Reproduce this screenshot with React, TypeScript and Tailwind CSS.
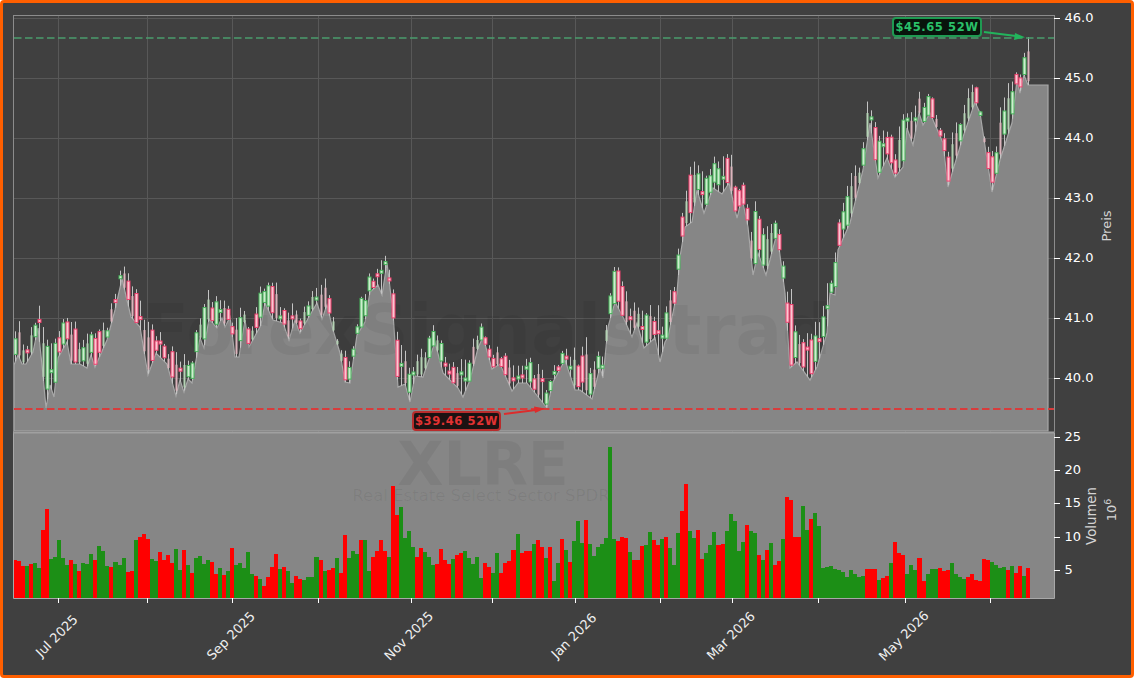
type Pt = [number, number];

// lower edge of the price series (screen px)
const lows: Pt[] = [[14,365],[18,355],[22,364],[26,364],[33,352],[38,328],[42,365],[46,408],[50,385],[54,397],[58,358],[67,342],[71,364],[80,364],[87,368],[91,355],[95,367],[107,340],[115,310],[122,279],[131,317],[140,327],[148,375],[156,353],[167,364],[176,396],[180,380],[184,392],[188,379],[192,383],[200,338],[204,348],[209,319],[217,328],[222,318],[225,327],[230,317],[235,357],[239,357],[245,320],[249,347],[261,325],[265,303],[273,320],[283,323],[289,340],[295,320],[300,333],[310,315],[317,303],[322,319],[327,305],[333,330],[340,353],[345,382],[350,383],[357,335],[365,322],[370,292],[378,285],[382,295],[387,263],[393,313],[398,387],[405,384],[410,402],[415,376],[423,377],[435,342],[443,373],[458,388],[463,397],[470,380],[478,348],[483,337],[492,369],[500,364],[512,391],[518,383],[527,383],[547,408],[553,382],[565,360],[575,390],[580,390],[592,399],[600,367],[603,378],[608,327],[615,302],[623,317],[632,337],[637,323],[644,348],[655,338],[660,362],[665,342],[668,337],[677,293],[680,257],[685,227],[692,222],[697,190],[704,213],[713,188],[722,194],[729,183],[737,218],[742,198],[748,227],[753,275],[758,253],[766,275],[777,233],[785,293],[790,368],[797,362],[810,380],[817,367],[827,333],[830,293],[835,295],[838,250],[850,223],[863,170],[870,123],[878,178],[887,158],[895,177],[903,167],[907,128],[913,145],[919,113],[923,125],[930,113],[943,143],[948,187],[953,170],[963,137],[975,102],[980,113],[992,192],[1000,160],[1008,135],[1012,123],[1017,80],[1020,93],[1024,75],[1028,85]];

// upper edge (wick tops)
const highs: Pt[] = [[14,335],[18,317],[27,342],[34,315],[38,296],[42,320],[50,348],[58,320],[70,317],[82,327],[94,327],[108,320],[119,267],[123,263],[135,273],[143,313],[155,325],[167,340],[180,355],[192,352],[201,308],[208,286],[220,300],[228,300],[232,323],[244,300],[253,325],[261,283],[277,282],[285,310],[293,298],[300,303],[308,300],[317,282],[326,277],[337,333],[345,347],[353,340],[362,293],[369,272],[382,258],[385,250],[390,255],[394,268],[397,330],[410,357],[418,352],[427,343],[434,318],[442,340],[455,363],[467,355],[475,332],[482,314],[490,345],[503,348],[515,363],[523,352],[540,365],[548,380],[555,363],[563,350],[583,343],[587,335],[592,357],[599,343],[604,337],[608,310],[616,253],[620,275],[628,293],[637,303],[648,307],[657,298],[668,300],[673,273],[677,258],[681,218],[688,170],[697,157],[701,160],[708,180],[713,157],[729,153],[733,151],[746,190],[749,215],[757,197],[762,228],[773,223],[777,211],[785,268],[790,277],[797,333],[813,333],[818,308],[823,308],[830,265],[834,265],[843,190],[853,170],[863,148],[867,100],[875,100],[880,125],[887,127],[895,138],[903,108],[910,112],[919,83],[932,88],[940,115],[948,147],[954,127],[963,107],[967,88],[975,78],[980,107],[987,148],[996,140],[999,112],[1007,87],[1011,67],[1016,62],[1020,67],[1024,47],[1028,37]];

// volume bars: r/g flag and top edge, read off the panel (z = (y - 480) * 3)
const volZ: [string, number[]][] = [
  ['r',[240,243,258]],['g',[258]],['r',[252]],['g',[249,264]],['r',[150,87]],['g',[237,231,180,234,255]],['r',[240]],['g',[252]],['r',[273]],['g',[249,252,222]],['r',[240]],['g',[198,213,258]],['r',[261]],['g',[246,255,234]],['r',[276,273]],['g',[180]],['r',[171,162,177]],['g',[237,243]],['r',[216,240,225,249]],['g',[207,270]],['r',[210]],['g',[255]],['r',[279]],['g',[234,228,252,240]],['r',[246,282]],['g',[264]],['r',[285]],['g',[273]],['r',[204]],['g',[255,249,264,216,282]],['r',[288]],['g',[297]],['r',[318,291,261,222]],['g',[267]],['r',[261]],['g',[273,309]],['r',[288,297]],['g',[300,291,291,231]],['r',[240]],['g',[273]],['r',[270,264]],['g',[234]],['r',[279,165]],['g',[234,213,222]],['r',[180]],['g',[180,273]],['r',[231,213,180,213]],['g',[231]],['r',[18,105]],['g',[81,174,153,201]],['r',[231,204]],['g',[216,231,255]],['r',[252,207,240,252]],['g',[237]],['r',[225,219]],['g',[213,234,252,231,294]],['r',[249,261]],['g',[279,219]],['r',[279,249,243,210]],['g',[162]],['r',[219,213,213]],['g',[192]],['r',[180,201]],['g',[234]],['r',[201]],['g',[303,249]],['r',[177]],['g',[210]],['r',[246]],['g',[183,123,189]],['r',[120]],['g',[192,228,201,192,174,-99,177]],['r',[183,171,174]],['g',[216]],['r',[240,240,198]],['g',[195,156]],['r',[180,195]],['g',[177]],['r',[171]],['g',[204,255,159]],['r',[93,12]],['g',[153,174]],['r',[150,237]],['g',[219,195,156]],['r',[195,192]],['g',[153,102,123,213,186]],['r',[135]],['g',[153,159]],['r',[225]],['g',[240]],['r',[210]],['g',[189]],['r',[255,243]],['g',[177]],
];
const volTail: [string, number][] = [['r',497],['r',500],['r',537],['r',537],['g',506],['g',530],['r',519],['g',513],['g',526],['g',568],['g',567],['g',566],['g',569],['g',570],['g',572],['g',577],['g',570],['g',574],['g',577],['g',576],['r',569],['r',569],['r',569],['g',580],['r',578],['r',576],['g',563],['r',542],['r',553],['r',555],['g',574],['g',565],['g',570],['r',558],['r',581],['g',574],['g',569],['g',569],['r',568],['r',571],['r',570],['g',563],['g',574],['g',577],['g',579],['r',577],['r',574],['r',580],['r',581],['r',559],['r',560],['g',562],['g',565],['g',568],['g',567],['r',570],['g',566],['r',573],['r',566],['g',576],['r',568]];

const bars: [string, number][] = [
  ...volZ.flatMap(([c, zs]) => zs.map((z): [string, number] => [c, 480 + z / 3])),
  ...volTail,
];

const lerp = (pts: Pt[], x: number) => {
  if (x <= pts[0][0]) return pts[0][1];
  for (let i = 1; i < pts.length; i++) {
    if (x <= pts[i][0]) {
      const [x0, y0] = pts[i - 1];
      const [x1, y1] = pts[i];
      return y0 + ((y1 - y0) * (x - x0)) / (x1 - x0);
    }
  }
  return pts[pts.length - 1][1];
};

let seed = 20250617;
const rnd = () => {
  seed = (seed * 1664525 + 1013904223) % 4294967296;
  return seed / 4294967296;
};

const candles = Array.from({ length: 253 }, (_, i) => {
  const x = Math.round(15 + i * 4.02) + 0.5;
  const low = lerp(lows, x);
  const envelope = lerp(highs, x);
  const j = i === 252 ? 0 : rnd();
  const high = Math.min(envelope + (low - envelope) * j * j * 0.55, low - 3);
  const range = low - high;
  const up = lerp(lows, x + 3) < lerp(lows, x - 3);
  const kind = i === 252 ? 0 : rnd();
  let top: number;
  let bottom: number;
  if (kind < 0.28) {
    top = high + range * 0.3;
    bottom = low - range * 0.08;
  } else if (kind < 0.44) {
    top = high + range * (0.25 + rnd() * 0.35);
    bottom = top + 3;
  } else {
    top = high + range * (0.05 + rnd() * 0.25);
    bottom = low - range * rnd() * 0.25;
  }
  return { x, low, high, up: rnd() < 0.2 ? !up : up, pale: kind < 0.28, top, bottom };
});

const gridX = [58, 147, 232, 318, 411, 492, 575, 660, 732, 818, 905, 990];
const priceTicks: [string, number][] = [['46.0', 18], ['45.0', 78], ['44.0', 138], ['43.0', 198], ['42.0', 258], ['41.0', 318], ['40.0', 378]];
const volTicks: [string, number][] = [['25', 437], ['20', 470], ['15', 503], ['10', 537], ['5', 570]];
const dateLabels: [string, number][] = [['Jul 2025', 60], ['Sep 2025', 234], ['Nov 2025', 412], ['Jan 2026', 577], ['Mar 2026', 734], ['May 2026', 907]];

const areaTop = lows.map(([x, y]) => `${x},${y}`).join(' ');
const font = { fontFamily: '"DejaVu Sans", sans-serif' };

export default function App() {
  return (
    <div className="h-[678px] w-[1134px] overflow-hidden rounded-[4px] border-[3px] border-[#ff5f00] bg-[#404040]">
      <svg width={1128} height={672} viewBox="3 3 1128 672" className="block" style={font}>
        {/* grid */}
        {gridX.map((x) => (
          <line key={x} x1={x + 0.5} x2={x + 0.5} y1={15} y2={432} stroke="#585858" />
        ))}
        {priceTicks.map(([t, y]) => (
          <line key={t} x1={13} x2={1054} y1={y + 0.5} y2={y + 0.5} stroke="#585858" />
        ))}

        {/* price area */}
        <polygon points={`14,431 ${areaTop} 1048,85 1048,431`} fill="#868686" />
        <polyline points={`14,431 ${areaTop} 1048,85 1048,431 14,431`} fill="none" stroke="#a8a8a8" strokeWidth={1.2} />

        {/* watermark */}
        <text x={142} y={354} fontSize={69} fontWeight={700} fill="#000" fillOpacity={0.05}>
          ForexSignals.trad
        </text>

        {/* candles */}
        {candles.map((c) => (
          <g key={c.x}>
            <line x1={c.x} x2={c.x} y1={c.high} y2={c.low} stroke="#c4c4c4" strokeWidth={1} />
            {c.pale ? (
              <rect x={c.x - 1} y={c.top} width={2} height={c.bottom - c.top} fill={c.up ? '#b4d2b4' : '#dcb4bc'} />
            ) : (
              <rect
                x={c.x - 1.5}
                y={c.top}
                width={3}
                height={c.bottom - c.top}
                fill={c.up ? '#cfeccf' : '#f8c8d2'}
                stroke={c.up ? '#46b45a' : '#f0406e'}
                strokeWidth={1}
              />
            )}
          </g>
        ))}

        {/* 52 week lines */}
        <line x1={14} x2={1054} y1={38} y2={38} stroke="#4a9c6c" strokeWidth={1.6} strokeDasharray="7.5 3.5" />
        <line x1={14} x2={1054} y1={409} y2={409} stroke="#d83c3c" strokeWidth={1.8} strokeDasharray="7.5 3.5" />

        {/* price frame */}
        <rect x={13.5} y={15.5} width={1041} height={417} fill="none" stroke="#8c8c8c" />

        {/* volume panel */}
        <rect x={13} y={433} width={1041} height={165} fill="#868686" />
        <text x={483} y={485} textAnchor="middle" fontSize={60} fontWeight={700} fill="#000" fillOpacity={0.06}>
          XLRE
        </text>
        <text x={481} y={501} textAnchor="middle" fontSize={16.5} fill="#000" fillOpacity={0.06}>
          Real Estate Select Sector SPDR
        </text>
        {bars.map(([c, top], i) => {
          const x = Math.round(13 + i * 4.02);
          return (
            <rect
              key={i}
              x={x}
              y={top}
              width={Math.round(13 + (i + 1) * 4.02) - x}
              height={598 - top}
              fill={c === 'r' ? '#ff0000' : '#1c8f16'}
            />
          );
        })}
        <path d="M13.5 433V598.5H1054.5V433" fill="none" stroke="#a8a8a8" />
        <line x1={13} x2={1054} y1={432.5} y2={432.5} stroke="#a0a0a0" strokeWidth={2} />

        {/* high callout */}
        <rect x={893} y={18} width={88} height={18} rx={3} fill="#08140c" stroke="#1f9a52" strokeWidth={2} />
        <text x={937} y={31} textAnchor="middle" fontSize={11.5} fontWeight={700} fill="#2ac069" letterSpacing={0.6}>
          $45.65 52W
        </text>
        <line x1={984} y1={32} x2={1016} y2={36} stroke="#22b45c" strokeWidth={2} />
        <polygon points="1025,37.3 1014,40 1015,33" fill="#22b45c" />

        {/* low callout */}
        <rect x={413} y={412} width={87} height={18} rx={3} fill="#1c1212" stroke="#b92c2c" strokeWidth={2} />
        <text x={456.5} y={425} textAnchor="middle" fontSize={11.5} fontWeight={700} fill="#e23232" letterSpacing={0.6}>
          $39.46 52W
        </text>
        <line x1={504} y1={414} x2={536} y2={410} stroke="#dd2c2c" strokeWidth={2} />
        <polygon points="545,408.6 534,406.5 535,413" fill="#dd2c2c" />

        {/* right axes */}
        {[...priceTicks, ...volTicks].map(([t, y]) => (
          <g key={t}>
            <line x1={1054} x2={1060} y1={y + 0.5} y2={y + 0.5} stroke="#fff" />
            <text x={1064.5} y={y + 4} fontSize={13} fill="#fff">
              {t}
            </text>
          </g>
        ))}
        <text transform="translate(1111 226) rotate(-90)" textAnchor="middle" fontSize={13} fill="#d4d4d4">
          Preis
        </text>
        <text transform="translate(1096 516) rotate(-90)" textAnchor="middle" fontSize={13.3} fill="#d4d4d4">
          Volumen
        </text>
        <text transform="translate(1116 510) rotate(-90)" textAnchor="middle" fontSize={13} fill="#d4d4d4">
          10<tspan dy={-5} fontSize={9.5}>6</tspan>
        </text>

        {/* date axis */}
        {gridX.map((x) => (
          <line key={x} x1={x + 0.5} x2={x + 0.5} y1={598} y2={603} stroke="#fff" />
        ))}
        {dateLabels.map(([t, x]) => (
          <text key={t} transform={`translate(${x} 639) rotate(-45)`} textAnchor="middle" fontSize={13} fill="#f0f0f0">
            {t}
          </text>
        ))}
      </svg>
    </div>
  );
}
